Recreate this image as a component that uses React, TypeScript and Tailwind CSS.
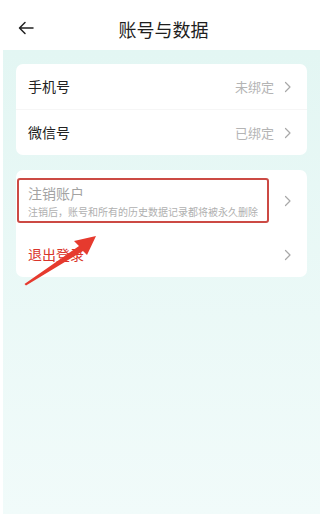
import React from "react";

function Chevron() {
  return (
    <svg width="8" height="12" viewBox="0 0 8 12" fill="none" className="shrink-0">
      <path d="M1.5 1.5 L6 6 L1.5 10.5" stroke="#a8a8a8" strokeWidth="1.2" strokeLinecap="round" strokeLinejoin="round" />
    </svg>
  );
}

function Row({ label, value, labelClass = "text-[#222]" }: { label: string; value?: string; labelClass?: string }) {
  return (
    <div className="flex h-[45px] items-center justify-between pl-3 pr-[15px]">
      <span className={`text-[14px] ${labelClass}`}>{label}</span>
      <div className="flex items-center gap-[10px]">
        {value && <span className="text-[13px] text-[#b4b4b4]">{value}</span>}
        <Chevron />
      </div>
    </div>
  );
}

export default function App() {
  return (
    <div
      className="relative h-[514px] w-[327px] overflow-hidden bg-white"
      style={{ fontFamily: '"Noto Sans CJK SC", "Noto Sans", sans-serif' }}
    >
      {/* header */}
      <div className="relative flex h-[50px] items-center justify-center">
        <svg width="16" height="14" viewBox="0 0 16 14" fill="none" className="absolute left-[18px] top-[21px]">
          <path d="M15 7 H2 M7 1.5 L1.5 7 L7 12.5" stroke="#222" strokeWidth="1.5" strokeLinecap="round" strokeLinejoin="round" />
        </svg>
        <span className="pt-[8px] text-[18px] text-[#1e1e1e]">账号与数据</span>
      </div>

      {/* content */}
      <div className="ml-[3px] flex h-[464px] w-[317px] flex-col gap-[15px] bg-gradient-to-b from-[#e3f6f3] to-[#f1fbfa] px-[13px] pt-[14px]">
        <div className="overflow-hidden rounded-[7px] bg-white">
          <Row label="手机号" value="未绑定" />
          <div className="h-px bg-[#f6f6f6]" />
          <Row label="微信号" value="已绑定" />
        </div>

        <div className="overflow-hidden rounded-[7px] bg-white">
          <div className="flex h-[62px] items-center justify-between pl-3 pr-[15px]">
            <div className="flex flex-col gap-[2px]">
              <span className="text-[14px] leading-[20px] text-[#a3a3a3]">注销账户</span>
              <span className="text-[10px] leading-[14px] text-[#b0b0b0]">注销后，账号和所有的历史数据记录都将被永久删除</span>
            </div>
            <Chevron />
          </div>
          <Row label="退出登录" labelClass="text-[#d9342b]" />
        </div>
      </div>

      {/* annotation box */}
      <div className="absolute left-[17px] top-[178px] h-[45px] w-[252px] rounded-[3px] border-[2px] border-[#cc4a44]" />

      {/* annotation arrow */}
      <svg className="absolute left-0 top-0" width="327" height="514" viewBox="0 0 327 514" fill="none">
        <path d="M24.5 284 L79 246 L74 241 L96 236 L87 255 L83 251 L26 285.5 Z" fill="#e63a2e" />
      </svg>
    </div>
  );
}
